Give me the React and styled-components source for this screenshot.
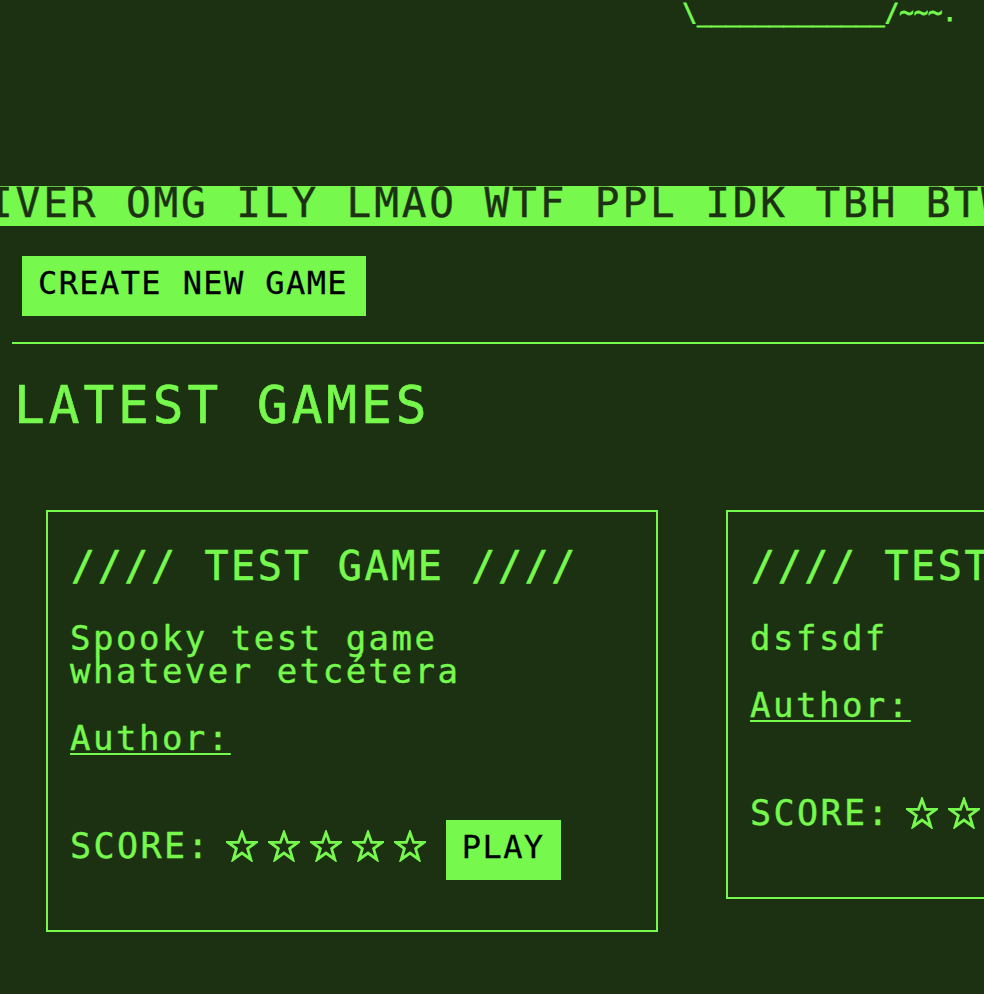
import React from "react";
import styled, { createGlobalStyle } from "styled-components";

const BG = "#1c3012";
const GREEN = "#76f84c";
const MONO = '"DejaVu Sans Mono", "Liberation Mono", monospace';

const GlobalStyle = createGlobalStyle`
  html, body {
    margin: 0;
    padding: 0;
    background: ${BG};
    color: ${GREEN};
    font-family: ${MONO};
    overflow: hidden;
  }
  * { box-sizing: border-box; }
`;

const Page = styled.div`
  width: 984px;
  min-height: 994px;
  overflow: hidden;
  -webkit-text-stroke: 0.4px currentColor;
`;

const Header = styled.header`
  display: flex;
  justify-content: flex-end;
  padding: 1px 27px 0 0;
  height: 186px;
`;

const Ascii = styled.pre`
  margin: 0;
  font-family: ${MONO};
  font-size: 24px;
  line-height: 24px;
  -webkit-text-stroke: 0.8px currentColor;
`;

const Ticker = styled.div`
  height: 40px;
  background: ${GREEN};
  color: ${BG};
  overflow: hidden;
  white-space: nowrap;
`;

const TickerText = styled.div`
  font-size: 41px;
  letter-spacing: 2.9px;
  line-height: 34px;
  margin-left: -12px;
`;

const Main = styled.main`
  padding-left: 12px;
`;

const SolidButton = styled.button`
  display: inline-block;
  border: none;
  border-radius: 0;
  background: ${GREEN};
  color: #000;
  font-family: ${MONO};
  font-size: 32px;
  letter-spacing: 1.4px;
  line-height: 32px;
  padding: 11px 18px 17px 16px;
  cursor: pointer;
  -webkit-text-stroke: 0.3px currentColor;
`;

const CreateButton = styled(SolidButton)`
  margin: 30px 0 0 10px;
`;

const PlayButton = styled(SolidButton)`
  padding-right: 16px;
`;

const Divider = styled.hr`
  margin: 26px 0 0 0;
  border: none;
  height: 2px;
  background: ${GREEN};
`;

const Heading = styled.h1`
  margin: 36px 0 0 2px;
  font-weight: normal;
  font-size: 51px;
  letter-spacing: 4px;
  line-height: 51px;
  -webkit-text-stroke: 0.7px currentColor;
`;

const CardRow = styled.div`
  display: flex;
  align-items: flex-start;
  gap: 68px;
  margin: 79px 0 0 34px;
`;

const Card = styled.article`
  flex: 0 0 612px;
  border: 2px solid ${GREEN};
  padding: 34px 22px 50px 22px;
`;

const CardTitle = styled.h2`
  margin: 0 0 0 1px;
  font-weight: normal;
  font-size: 40px;
  letter-spacing: 2.6px;
  line-height: 40px;
  white-space: nowrap;
  -webkit-text-stroke: 0.6px currentColor;
`;

const Description = styled.p`
  margin: 36px 0 0 0;
  font-size: 34px;
  letter-spacing: 2.5px;
  line-height: 33px;
  max-width: 420px;
`;

const AuthorLink = styled.a`
  display: block;
  margin-top: 34px;
  font-size: 34px;
  letter-spacing: 2.5px;
  line-height: 33px;
  color: ${GREEN};
  text-decoration: underline;
  text-decoration-thickness: 2px;
  text-underline-offset: 3px;
`;

const ScoreRow = styled.div`
  display: flex;
  align-items: baseline;
  margin-top: 65px;
`;

const ScoreLabel = styled.span`
  font-size: 35px;
  letter-spacing: 2.4px;
  line-height: 35px;
  margin-right: 15px;
`;

const Stars = styled.span`
  display: flex;
  gap: 10px;
  align-self: flex-end;
  margin: 0 20px 18px 0;
`;

const StarIcon = styled.svg`
  display: block;
  width: 32px;
  height: 32px;
`;

const Star = () => (
  <StarIcon viewBox="0 0 32 32">
    <path
      d="M16 2.5 L19.6 12.4 L30 12.4 L21.6 18.6 L24.8 29.5 L16 23 L7.2 29.5 L10.4 18.6 L2 12.4 L12.4 12.4 Z"
      fill="none"
      stroke={GREEN}
      strokeWidth="2.8"
      strokeLinejoin="miter"
    />
  </StarIcon>
);

const games = [
  {
    title: "//// TEST GAME ////",
    description: "Spooky test game whatever etcétera",
  },
  {
    title: "//// TEST GAME 2 ////",
    description: "dsfsdf",
  },
];

export default function App() {
  return (
    <Page>
      <GlobalStyle />
      <Header>
        <Ascii>{"\\_____________/~~~."}</Ascii>
      </Header>
      <Ticker>
        <TickerText>IVER OMG ILY LMAO WTF PPL IDK TBH BTW LOL SMH IMO</TickerText>
      </Ticker>
      <Main>
        <CreateButton>CREATE NEW GAME</CreateButton>
        <Divider />
        <Heading>LATEST GAMES</Heading>
        <CardRow>
          {games.map((g) => (
            <Card key={g.title}>
              <CardTitle>{g.title}</CardTitle>
              <Description>{g.description}</Description>
              <AuthorLink href="#">Author:</AuthorLink>
              <ScoreRow>
                <ScoreLabel>SCORE:</ScoreLabel>
                <Stars>
                  {[0, 1, 2, 3, 4].map((i) => (
                    <Star key={i} />
                  ))}
                </Stars>
                <PlayButton>PLAY</PlayButton>
              </ScoreRow>
            </Card>
          ))}
        </CardRow>
      </Main>
    </Page>
  );
}
